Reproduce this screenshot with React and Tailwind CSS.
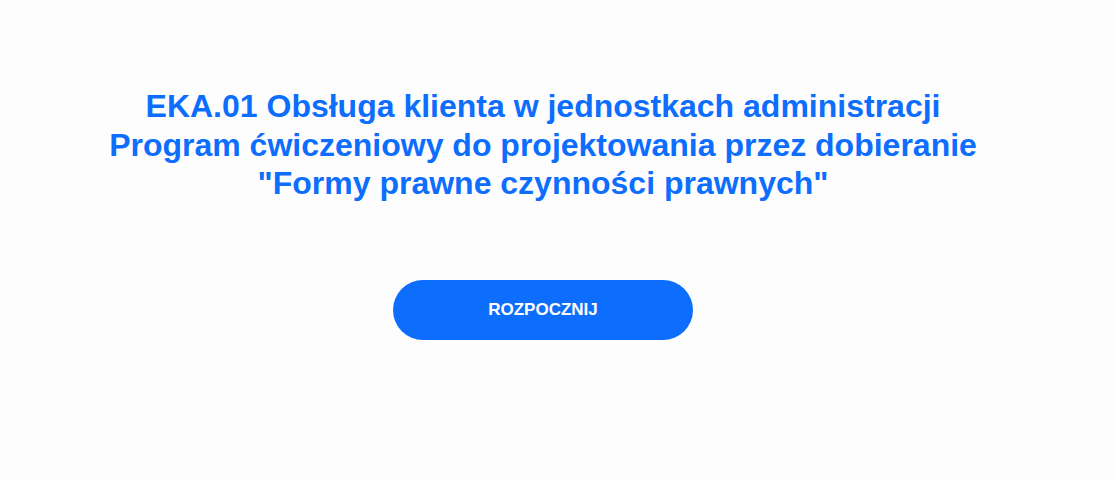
export default function App() {
  return (
    <div className="min-h-[479px] w-full bg-[#fdfdfd]" style={{ fontFamily: '"Liberation Sans", Arial, sans-serif' }}>
      <div className="w-[1086px] flex flex-col items-center pt-[87px]">
        <h1 className="text-center text-[32px] leading-[38.5px] font-bold text-[#0d6efd]">
          EKA.01 Obsługa klienta w jednostkach administracji
          <br />
          Program ćwiczeniowy do projektowania przez dobieranie
          <br />
          "Formy prawne czynności prawnych"
        </h1>
        <button className="mt-[77px] w-[300px] h-[60px] rounded-full bg-[#0d6efd] text-white text-[17px] font-bold">
          ROZPOCZNIJ
        </button>
      </div>
    </div>
  );
}
